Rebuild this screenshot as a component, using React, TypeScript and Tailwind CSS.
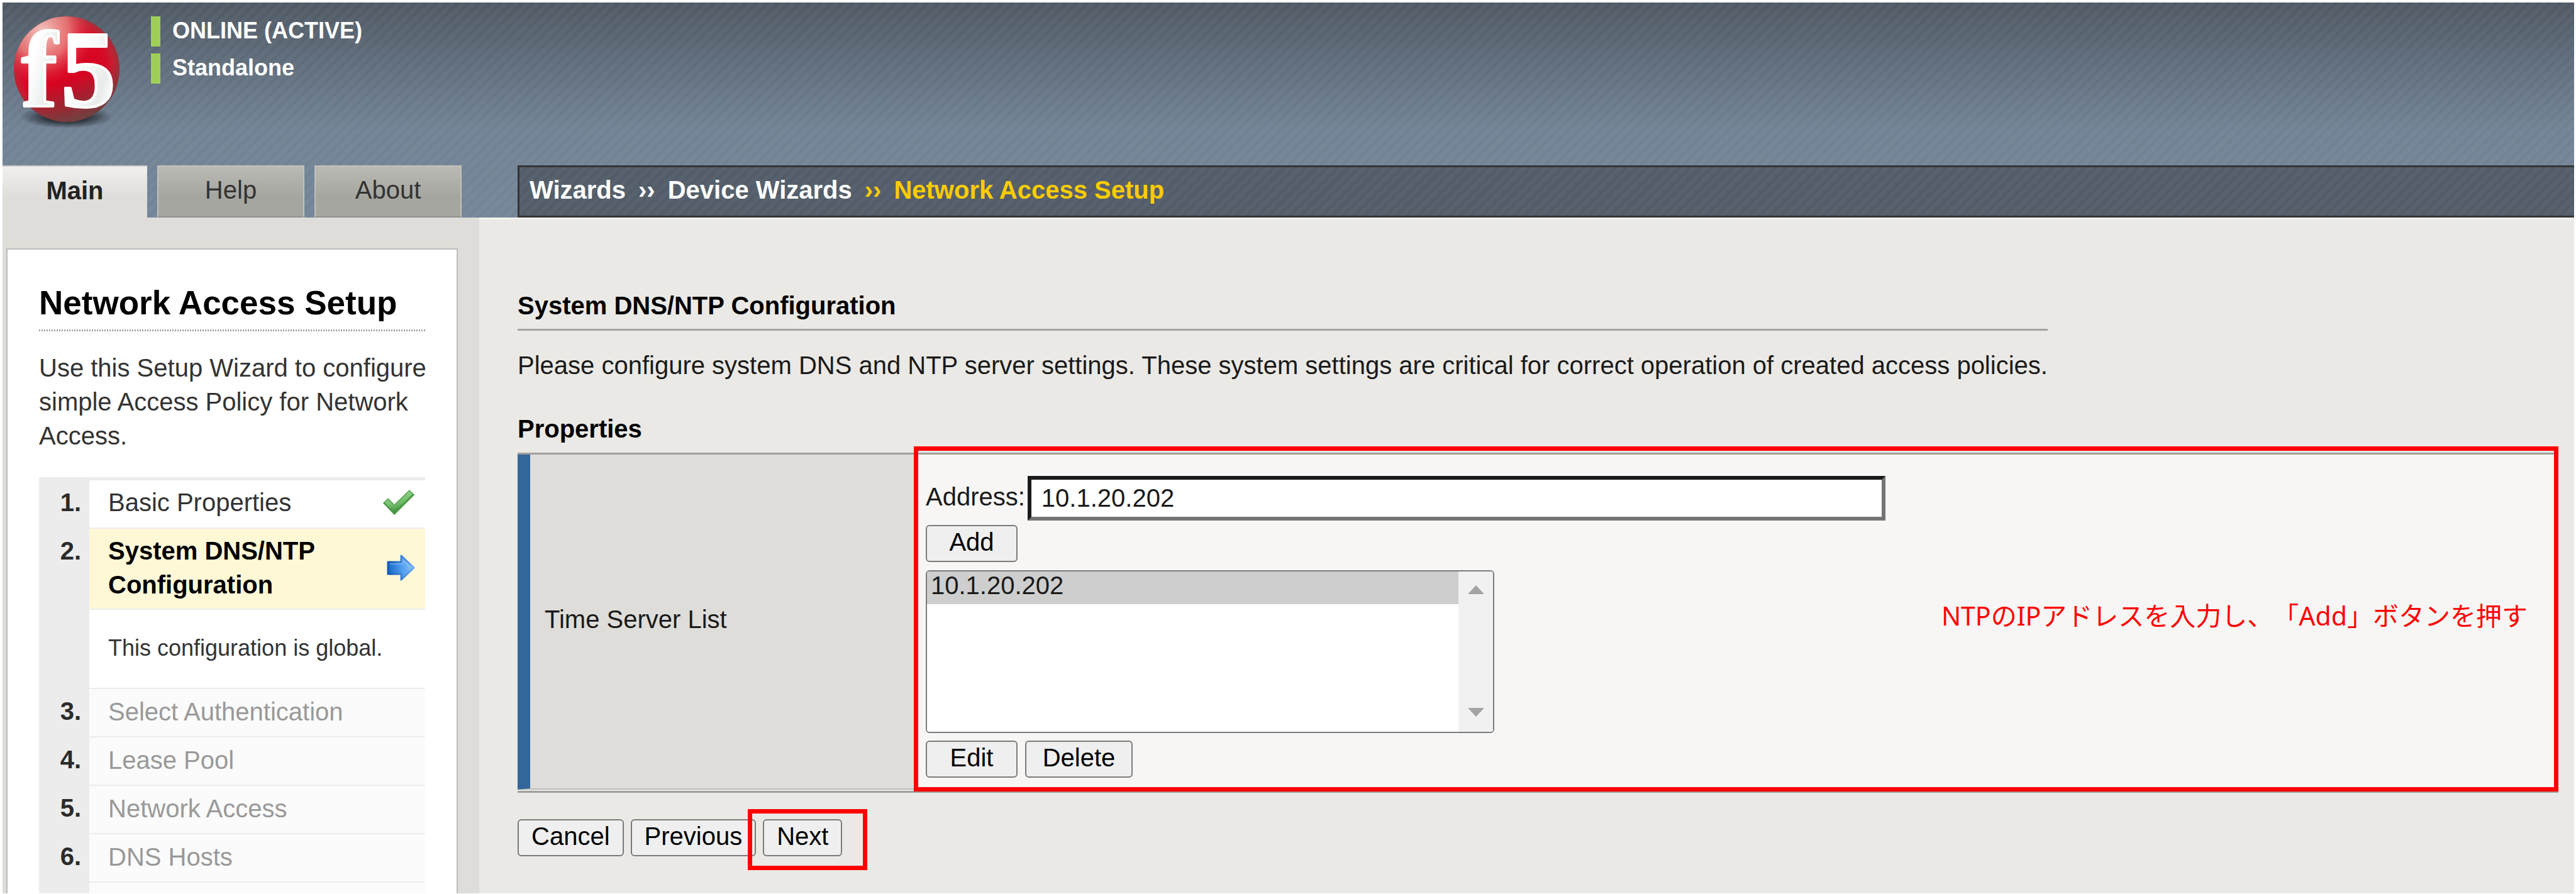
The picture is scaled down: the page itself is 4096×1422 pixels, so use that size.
import type { ReactNode } from "react";

function Logo() {
  return (
    <svg width="190" height="214" viewBox="0 -14 190 214" role="img" aria-label="f5">
      <defs>
        <radialGradient id="ball" cx="0.48" cy="0.5" r="0.52">
          <stop offset="0" stopColor="#d9001f" />
          <stop offset="0.75" stopColor="#d60a26" />
          <stop offset="0.9" stopColor="#c41f32" />
          <stop offset="1" stopColor="#9c3039" />
        </radialGradient>
        <radialGradient id="shine" cx="0.27" cy="0.15" r="0.5">
          <stop offset="0" stopColor="#f6d3cd" stopOpacity="0.95" />
          <stop offset="0.5" stopColor="#ec8f88" stopOpacity="0.75" />
          <stop offset="1" stopColor="#e0253a" stopOpacity="0" />
        </radialGradient>
        <linearGradient id="base" x1="0.4" y1="0.4" x2="0.6" y2="1">
          <stop offset="0.35" stopColor="#6a3a3a" stopOpacity="0" />
          <stop offset="1" stopColor="#6a4242" stopOpacity="0.95" />
        </linearGradient>
        <linearGradient id="letters" x1="0" y1="0" x2="1" y2="0.7">
          <stop offset="0.4" stopColor="#ffffff" />
          <stop offset="0.8" stopColor="#e9ebeb" />
          <stop offset="1" stopColor="#ffffff" />
        </linearGradient>
        <radialGradient id="shadow">
          <stop offset="0.4" stopColor="#1d242b" stopOpacity="0.9" />
          <stop offset="1" stopColor="#1d242b" stopOpacity="0" />
        </radialGradient>
      </defs>
      <ellipse cx="92" cy="168" rx="74" ry="18" fill="url(#shadow)" />
      <circle cx="92" cy="92" r="84" fill="url(#ball)" />
      <circle cx="92" cy="92" r="84" fill="url(#base)" />
      <circle cx="92" cy="92" r="84" fill="url(#shine)" />
      <g
        fill="url(#letters)"
        stroke="#ffffff"
        strokeWidth="4"
        strokeLinejoin="round"
        fontFamily='"Liberation Serif", serif'
        fontWeight="700"
      >
        <text x="20" y="151" fontSize="172">f</text>
        <text x="83" y="151" fontSize="174">5</text>
      </g>
    </svg>
  );
}

function CheckIcon() {
  return (
    <svg className="shrink-0" width="52" height="42" viewBox="0 0 52 42" aria-label="Completed" role="img">
      <defs>
        <linearGradient id="check" x1="0" y1="0" x2="0.4" y2="1">
          <stop offset="0.3" stopColor="#8fd18a" />
          <stop offset="0.65" stopColor="#6fbc68" />
          <stop offset="1" stopColor="#3d8a3b" />
        </linearGradient>
      </defs>
      <path d="M1 22 L9 14 L19 24 L43 1 L51 9 L19 41 Z" fill="#66b060" />
      <path d="M4 22 L9 17 L19 27 L43 4 L48 9 L19 37 Z" fill="url(#check)" />
      <path d="M19 41 L51 9 L49 7 L19 37 L3 21 L1 22 Z" fill="#45913f" opacity="0.8" />
    </svg>
  );
}

function ArrowIcon() {
  return (
    <svg className="shrink-0" width="45" height="42" viewBox="0 0 45 42" aria-label="Current step" role="img">
      <defs>
        <linearGradient id="arrow" x1="0" y1="0.5" x2="1" y2="0.4">
          <stop offset="0" stopColor="#1668c8" />
          <stop offset="0.5" stopColor="#4d9bee" />
          <stop offset="1" stopColor="#8fc6fb" />
        </linearGradient>
        <linearGradient id="arrowEdge" x1="0" y1="0" x2="1" y2="0">
          <stop offset="0" stopColor="#1156b4" />
          <stop offset="1" stopColor="#6aaaf0" />
        </linearGradient>
      </defs>
      <path
        d="M2 12 H23 V2 L43 21 L23 40 V31 H2 Z"
        fill="url(#arrow)"
        stroke="url(#arrowEdge)"
        strokeWidth="3"
        strokeLinejoin="round"
      />
      <path d="M5 15 H26 V9 L39 21" fill="none" stroke="#a9d2fb" strokeWidth="2" opacity="0.4" />
    </svg>
  );
}

function Status({ children }: { children: ReactNode }) {
  return (
    <p className="flex h-[48px] items-start border-l-[15px] border-[#a0cf57] pl-[19px] text-[36px] leading-[46px] font-bold text-white">
      {children}
    </p>
  );
}

function Button({ children, className = "px-5" }: { children: ReactNode; className?: string }) {
  return (
    <button
      type="button"
      className={`h-[59px] rounded-md border-2 border-[#7b7b7b] bg-[#efefef] pb-1 text-[40px] leading-[51px] text-black ${className}`}
    >
      {children}
    </button>
  );
}

type StepProps = {
  number?: string;
  label: string;
  labelClass: string;
  icon?: ReactNode;
};

function Step({ number, label, labelClass, icon }: StepProps) {
  return (
    <li className="flex">
      <span className="w-[80px] shrink-0 pt-2 pr-[13px] text-right text-[40px] leading-[54px] font-bold text-[#2b2b2b]">
        {number}
      </span>
      <div className={`flex flex-1 items-center justify-between border-b-2 border-[#ececec] pr-4 pl-[30px] ${labelClass}`}>
        <span>{label}</span>
        {icon}
      </div>
    </li>
  );
}

const pending = "bg-[#fbfbfb] pt-[9px] pb-[12px] text-[40px] leading-[54px] text-[#999999]";
const upcoming = [
  ["3.", "Select Authentication"],
  ["4.", "Lease Pool"],
  ["5.", "Network Access"],
  ["6.", "DNS Hosts"],
];

const tab = "flex h-[83px] items-center justify-center pb-1.5 text-[40px]";

export default function App() {
  return (
    <div className="flex h-screen flex-col overflow-hidden border-t-4 border-r-3 border-b border-l-4 border-white bg-[#eae9e5] font-['Liberation_Sans',Arial,sans-serif] text-black">
      <header className="bg-[repeating-linear-gradient(135deg,rgba(255,255,255,0.035)_0px,rgba(255,255,255,0.035)_5px,transparent_7px,transparent_10px,rgba(255,255,255,0.035)_12px),linear-gradient(180deg,#4f5964_0px,#718294_200px,#738597_342px)]">
        <div className="flex h-[259px] items-start">
          <div className="pl-[10px]">
            <Logo />
          </div>
          <div className="flex flex-col gap-[11px] pt-[22px] pl-[36px]">
            <Status>ONLINE (ACTIVE)</Status>
            <Status>Standalone</Status>
          </div>
        </div>
        <div className="flex">
          <nav className="flex w-[819px] shrink-0 gap-4 text-[#333333]" aria-label="Sections">
            <a href="#main" className={`${tab} w-[230px] border-t-2 border-[#c9c8c4] bg-linear-to-b from-[#f1f0ef] to-[#deddd9] to-60% font-bold text-[#222222]`}>
              Main
            </a>
            <a href="#help" className={`${tab} w-[234px] border-2 border-[#c0c0bc] border-b-[#8f8f8b] bg-linear-to-b from-[#bbbab6] to-[#a5a6a0] to-60%`}>
              Help
            </a>
            <a href="#about" className={`${tab} w-[234px] border-2 border-[#c0c0bc] border-b-[#8f8f8b] bg-linear-to-b from-[#bbbab6] to-[#a5a6a0] to-60%`}>
              About
            </a>
          </nav>
          <nav
            aria-label="Breadcrumb"
            className="flex h-[83px] flex-1 items-center gap-5 border-3 border-r-0 border-[#333435] bg-[#525d69] bg-[repeating-linear-gradient(135deg,rgba(255,255,255,0.03)_0px,rgba(255,255,255,0.03)_5px,transparent_7px,transparent_10px,rgba(255,255,255,0.03)_12px)] pb-1.5 pl-4 text-[40px] font-bold text-white"
          >
            <a href="#wizards">Wizards</a>
            <span>››</span>
            <a href="#device">Device Wizards</a>
            <span className="text-[#ffcc00]">››</span>
            <span className="text-[#ffcc00]">Network Access Setup</span>
          </nav>
        </div>
      </header>

      <div className="flex min-h-0 flex-1">
        <aside className="flex w-[758px] shrink-0 flex-col bg-[#deddd9] pt-[49px] pr-[34px] pl-[6px]">
          <div className="flex flex-1 flex-col border-2 border-b-0 border-[#bcbcbc] bg-white px-[50px] pt-[53px]">
            <h2 className="pb-[10px] text-[53px] leading-[64px] font-bold whitespace-nowrap">Network Access Setup</h2>
            <div className="h-[3px] bg-[repeating-linear-gradient(90deg,#a0a0a0_0px,#a0a0a0_2px,#ffffff_2px,#ffffff_4px)]" />
            <p className="-mr-4 mt-[31px] text-[40px] leading-[54px] text-[#333333]">
              Use this Setup Wizard to configure simple Access Policy for Network Access.
            </p>
            <ol className="mt-[39px] flex-1 border-t-5 border-[#ececec] bg-linear-to-r from-[#ececec] from-[80px] to-[#fbfbfb] to-[80px]">
              <Step
                number="1."
                label="Basic Properties"
                labelClass="bg-white pt-2 pb-[13px] text-[40px] leading-[54px] text-[#333333]"
                icon={<CheckIcon />}
              />
              <Step
                number="2."
                label="System DNS/NTP Configuration"
                labelClass="bg-[#fff8d7] pt-2 pb-[11px] text-[40px] leading-[54px] font-bold text-black"
                icon={<ArrowIcon />}
              />
              <Step
                label="This configuration is global."
                labelClass="bg-white pt-[37px] pb-[39px] text-[36px] leading-[48px] text-[#333333]"
              />
              {upcoming.map(([number, label]) => (
                <Step key={number} number={number} label={label} labelClass={pending} />
              ))}
            </ol>
          </div>
        </aside>

        <main className="flex-1 border-t-3 border-[#f3f2ee] pt-[110px] pr-[25px] pl-[61px]">
          <div className="w-fit">
            <h1 className="border-b-3 border-[#a3a39f] pb-[10px] text-[40px] leading-[54px] font-bold">
              System DNS/NTP Configuration
            </h1>
            <p className="mt-[28px] text-[40px] leading-[54px] text-[#1a1a1a]">
              Please configure system DNS and NTP server settings. These system settings are critical for correct
              operation of created access policies.
            </p>
          </div>
          <h2 className="mt-[47px] text-[40px] leading-[54px] font-bold">Properties</h2>
          <table className="mt-[11px] w-full border-separate border-spacing-0 border-t-3 border-b-3 border-[#9f9f9b] pb-0.5">
            <tbody>
              <tr>
                <th
                  scope="row"
                  className="w-[630px] border-b-2 border-l-[20px] border-b-[#bbbbb7] border-l-[#336699] bg-[#deddd9] pb-2 pl-[23px] text-left align-middle text-[40px] leading-[54px] font-normal text-[#1a1a1a]"
                >
                  Time Server List
                </th>
                <td className="relative border-b-2 border-[#bbbbb7] bg-[#f7f6f4] pt-[34px] pr-[49px] pb-[17px] pl-[19px]">
                  <div className="flex items-center justify-between">
                    <div>
                      <div className="flex items-center gap-1">
                        <label htmlFor="address" className="pb-1.5 text-[40px] leading-[54px] text-[#1a1a1a]">
                          Address:
                        </label>
                        <input
                          id="address"
                          type="text"
                          defaultValue="10.1.20.202"
                          className="h-[71px] w-[1364px] border-6 border-t-[#1a1a1a] border-r-[#747474] border-b-[#747474] border-l-[#1a1a1a] bg-white px-4 text-[40px] leading-[54px] text-[#1a1a1a]"
                        />
                      </div>
                      <div className="mt-[7px] flex">
                        <Button className="w-[146px]">Add</Button>
                      </div>
                      <div className="mt-[13px] flex h-[259px] w-[904px] overflow-hidden rounded-md border-2 border-[#7b7b7b] bg-white">
                        <select
                          size={4}
                          aria-label="Time servers"
                          defaultValue="10.1.20.202"
                          className="flex-1 overflow-hidden bg-white text-[40px] outline-none"
                        >
                          <option
                            value="10.1.20.202"
                            className="bg-[#cecece] px-[6px] pt-0 pb-[7px] leading-[44px] text-[#1a1a1a]"
                          >
                            10.1.20.202
                          </option>
                        </select>
                        <div className="flex w-[55px] flex-col items-center justify-between bg-[#f1f1f1] pt-[22px] pb-[24px]">
                          <svg width="26" height="14" viewBox="0 0 26 14" aria-hidden="true">
                            <path d="M13 0 L26 14 H0 Z" fill="#a3a3a3" />
                          </svg>
                          <svg width="26" height="14" viewBox="0 0 26 14" aria-hidden="true">
                            <path d="M13 14 L26 0 H0 Z" fill="#a3a3a3" />
                          </svg>
                        </div>
                      </div>
                      <div className="mt-3 flex gap-3">
                        <Button className="w-[146px]">Edit</Button>
                        <Button className="w-[171px]">Delete</Button>
                      </div>
                    </div>
                    <p className="pb-9 font-['Noto_Sans','Noto_Sans_CJK_JP',sans-serif] text-[41px] leading-[54px] whitespace-nowrap text-[#ff0000] [text-spacing-trim:space-all]">
                      NTPのIPアドレスを入力し、「Add」ボタンを押す
                    </p>
                  </div>
                  <div className="pointer-events-none absolute -top-[13px] right-0 -bottom-[5px] left-0 border-7 border-[#ff0000]" />
                </td>
              </tr>
            </tbody>
          </table>
          <div className="mt-[42px] flex gap-[11px]">
            <Button>Cancel</Button>
            <Button>Previous</Button>
            <div className="relative flex">
              <Button>Next</Button>
              <div className="pointer-events-none absolute -top-4 -right-10 -bottom-[22px] -left-6 border-7 border-[#ff0000]" />
            </div>
          </div>
        </main>
      </div>
    </div>
  );
}
